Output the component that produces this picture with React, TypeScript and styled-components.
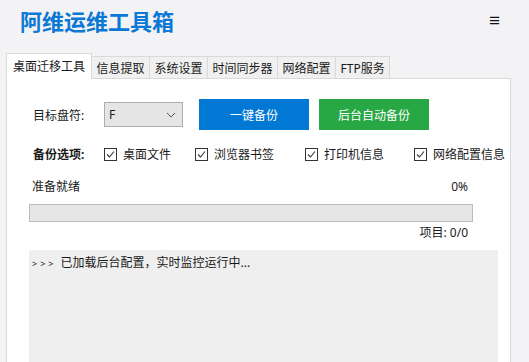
import styled, { createGlobalStyle } from "styled-components";

const GlobalStyle = createGlobalStyle`
  html, body {
    margin: 0;
    padding: 0;
    background: #f3f3f5;
    overflow: hidden;
  }
  body {
    font-family: "Noto Sans", "Noto Sans CJK SC", sans-serif;
    font-size: 12px;
    color: #1a1a1a;
  }
`;

const Page = styled.div`
  width: 529px;
  height: 362px;
  overflow: hidden;
`;

const Header = styled.div`
  height: 40px;
  padding: 0 28px 0 20px;
  display: flex;
  align-items: center;
  justify-content: space-between;
`;

const Title = styled.h1`
  margin: 0;
  font-family: "Noto Sans CJK SC", sans-serif;
  font-size: 22px;
  font-weight: 700;
  color: #0a78d4;
  line-height: 26px;
`;

const MenuIcon = styled.span`
  font-size: 13px;
  font-weight: 700;
  color: #111;
  line-height: 1;
`;

const TabBar = styled.div`
  margin: 13px 0 0 6px;
  display: flex;
  align-items: flex-end;
  position: relative;
  z-index: 1;
`;

const Tab = styled.div<{ $active?: boolean }>`
  box-sizing: border-box;
  height: ${({ $active }) => ($active ? "26px" : "23px")};
  padding: 0 ${({ $active }) => ($active ? "6px" : "4.5px")};
  display: flex;
  align-items: center;
  border: 1px solid #d9d9d9;
  border-bottom: ${({ $active }) => ($active ? "1px solid #fff" : "1px solid #d9d9d9")};
  margin-left: -1px;
  margin-bottom: -1px;
  background: ${({ $active }) => ($active ? "#fff" : "#f0f0f0")};
  font-size: 12px;
  color: #1a1a1a;
  white-space: nowrap;
  &:first-child {
    margin-left: 0;
  }
`;

const Panel = styled.div`
  margin: 0 18px 0 6px;
  border: 1px solid #d9d9d9;
  background: #fff;
  padding: 20px 12px 0 22px;
  height: 300px;
`;

const FormRow = styled.div`
  display: flex;
  align-items: center;
  padding-left: 4px;
`;

const Label = styled.span<{ $bold?: boolean }>`
  width: 71px;
  flex-shrink: 0;
  font-weight: ${({ $bold }) => ($bold ? 700 : 400)};
  white-space: nowrap;
`;

const Select = styled.div`
  box-sizing: border-box;
  width: 79px;
  height: 25px;
  border: 1px solid #adadad;
  background: #e5e5e5;
  display: flex;
  align-items: center;
  justify-content: space-between;
  padding: 0 6px 0 4px;
  margin-right: 16px;
`;

const Button = styled.button<{ $color: string }>`
  width: 110px;
  height: 31px;
  border: none;
  background: ${({ $color }) => $color};
  color: #fff;
  font-family: inherit;
  font-size: 12px;
  margin-right: 10px;
  padding: 0;
`;

const OptionsRow = styled(FormRow)`
  margin-top: 16px;
  height: 16px;
`;

const Option = styled.label<{ $w?: number }>`
  display: flex;
  align-items: center;
  gap: 6px;
  flex-shrink: 0;
  width: ${({ $w }) => ($w ? `${$w}px` : "auto")};
  white-space: nowrap;
`;

const Box = styled.span`
  box-sizing: border-box;
  width: 13px;
  height: 13px;
  border: 1px solid #333;
  background: #fff;
  display: flex;
  align-items: center;
  justify-content: center;
`;

const Progress = styled.div`
  margin-top: 17px;
  width: 444px;
`;

const StatusLine = styled.div`
  display: flex;
  justify-content: space-between;
  padding: 0 5px 0 3px;
  line-height: 16px;
`;

const Bar = styled.div`
  box-sizing: border-box;
  height: 18px;
  margin: 9px 0 3px;
  border: 1px solid #bcbcbc;
  background: #e6e6e6;
`;

const Count = styled.div`
  text-align: right;
  padding-right: 5px;
  line-height: 16px;
`;

const Log = styled.div`
  margin-top: 9px;
  height: 140px;
  background: #efefef;
  padding: 5px 3px;
  line-height: 16px;
`;

const Prompt = styled.span`
  font-size: 9px;
  letter-spacing: 3px;
  margin-right: 4px;
`;

function Check({ label, w }: { label: string; w?: number }) {
  return (
    <Option $w={w}>
      <Box>
        <svg width="9" height="9" viewBox="0 0 9 9">
          <path d="M1 4.5 L3.5 7 L8 1.5" fill="none" stroke="#333" strokeWidth="1.1" />
        </svg>
      </Box>
      {label}
    </Option>
  );
}

export default function App() {
  const tabs = ["桌面迁移工具", "信息提取", "系统设置", "时间同步器", "网络配置", "FTP服务"];
  return (
    <Page>
      <GlobalStyle />
      <Header>
        <Title>阿维运维工具箱</Title>
        <MenuIcon>≡</MenuIcon>
      </Header>
      <TabBar>
        {tabs.map((t, i) => (
          <Tab key={t} $active={i === 0}>
            {t}
          </Tab>
        ))}
      </TabBar>
      <Panel>
        <FormRow>
          <Label>目标盘符:</Label>
          <Select>
            <span>F</span>
            <svg width="10" height="6" viewBox="0 0 10 6">
              <path d="M1 1 L5 5 L9 1" fill="none" stroke="#555" strokeWidth="1" />
            </svg>
          </Select>
          <Button $color="#0078d4">一键备份</Button>
          <Button $color="#28a745">后台自动备份</Button>
        </FormRow>
        <OptionsRow>
          <Label $bold>备份选项:</Label>
          <Check label="桌面文件" w={91} />
          <Check label="浏览器书签" w={110} />
          <Check label="打印机信息" w={109} />
          <Check label="网络配置信息" />
        </OptionsRow>
        <Progress>
          <StatusLine>
            <span>准备就绪</span>
            <span>0%</span>
          </StatusLine>
          <Bar />
          <Count>项目: 0/0</Count>
        </Progress>
        <Log>
          <Prompt>&gt;&gt;&gt;</Prompt>已加载后台配置，实时监控运行中...
        </Log>
      </Panel>
    </Page>
  );
}
